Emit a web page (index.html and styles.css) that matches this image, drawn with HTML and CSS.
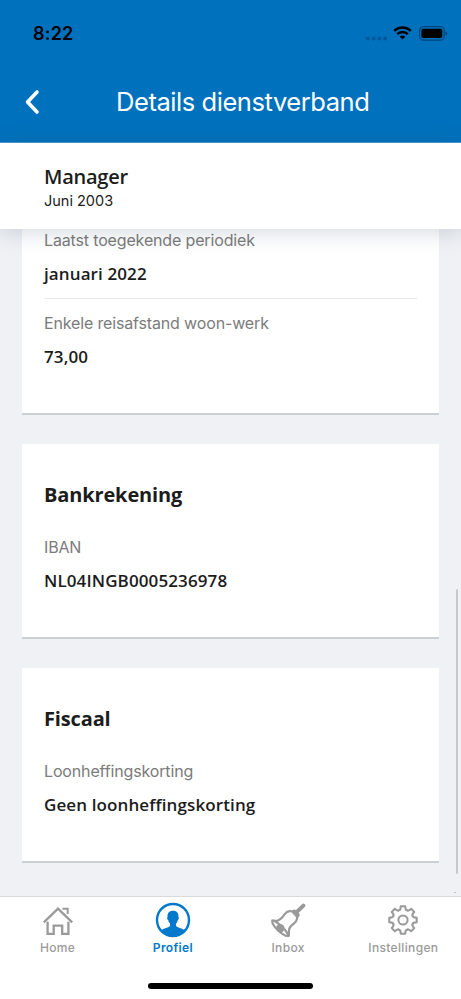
FILE: index.html
```html
<!DOCTYPE html>
<html lang="nl">
<head>
<meta charset="utf-8">
<title>Details dienstverband</title>
<link rel="stylesheet" href="styles.css">
</head>
<body>
<div class="app">
  <header class="top">
    <div class="status">
      <span class="time">8:22</span>
      <div class="status-icons">
        <svg width="22" height="5" viewBox="0 0 22 5" class="dots"><circle cx="2" cy="2.5" r="1.9"/><circle cx="7.7" cy="2.5" r="1.9"/><circle cx="13.4" cy="2.5" r="1.9"/><circle cx="19.1" cy="2.5" r="1.9"/></svg>
        <svg width="19" height="14" viewBox="0 0 19 14" class="wifi"><path d="M1.2 4.9a11.8 11.8 0 0 1 16.6 0M4.2 8.1a7.5 7.5 0 0 1 10.6 0" fill="none" stroke="#000" stroke-width="2.5"/><path d="M9.5 13.6 6.7 10.8a4 4 0 0 1 5.6 0Z"/></svg>
        <svg width="29" height="15" viewBox="0 0 29 15" class="battery"><rect x=".6" y=".6" width="24.6" height="13.6" rx="4" fill="none" stroke="#00457a" stroke-width="1.2"/><rect x="2.4" y="2.7" width="20.9" height="9.4" rx="2"/><path d="M26.5 5.3q1.7.7 1.7 2.1t-1.7 2.1z" fill="#00457a"/></svg>
      </div>
    </div>
    <div class="nav">
      <svg class="back" width="16" height="26" viewBox="0 0 16 26"><path d="M13 3 3.6 13l9.4 10"/></svg>
      <h1>Details dienstverband</h1>
    </div>
  </header>
  <section class="person">
    <h2>Manager</h2>
    <p>Juni 2003</p>
  </section>
  <main class="content">
    <section class="card first">
      <div class="field line"><div class="label">Laatst toegekende periodiek</div><div class="value">januari 2022</div></div>
      <div class="field"><div class="label">Enkele reisafstand woon-werk</div><div class="value">73,00</div></div>
    </section>
    <section class="card">
      <h3>Bankrekening</h3>
      <div class="field"><div class="label">IBAN</div><div class="value">NL04INGB0005236978</div></div>
    </section>
    <section class="card">
      <h3>Fiscaal</h3>
      <div class="field"><div class="label">Loonheffingskorting</div><div class="value">Geen loonheffingskorting</div></div>
    </section>
    <i class="scrollbar"></i><i class="speck"></i>
  </main>
  <footer class="tabs">
    <div class="tab"><svg width="36" height="36" viewBox="0 0 36 36"><g fill="none" stroke="currentColor" stroke-width="2.3"><path d="M3.8 20.4 18 6.6l14.2 13.8M7.6 19.8v12h6.1v-8.2h8.5v8.2h6.2v-12"/><path d="M22.4 6.7h5.3v5.2" stroke-width="2"/></g></svg><span>Home</span></div>
    <div class="tab active"><svg width="36" height="36" viewBox="0 0 36 36"><circle cx="18" cy="18" r="16" fill="none" stroke="currentColor" stroke-width="2.4"/><path d="M18 8.8c-4 0-5.8 2.6-5.4 6.2-.9.1-.4 2.6.6 3 .4 1.8 1 2.8 1.8 3.6v2.2c-1 2.2-6.3 2.1-9.2 5A16.4 16.4 0 0 0 18 34.4a16.4 16.4 0 0 0 12.2-5.6c-2.9-2.9-8.2-2.8-9.2-5v-2.2c.8-.8 1.4-1.8 1.8-3.6 1-.4 1.5-2.9.6-3 .4-3.6-1.4-6.2-5.4-6.2Z" fill="currentColor"/></svg><span>Profiel</span></div>
    <div class="tab"><svg width="36" height="36" viewBox="0 0 36 36"><path d="m27.4 9.4 6-5.8" stroke="currentColor" stroke-width="4" stroke-linecap="round"/><path d="m24.4 10 3 3" stroke="currentColor" stroke-width="4.6" stroke-linecap="round"/><path d="M2.3 18.4c-.4 2.1.8 4.8 4.4 8.5 5 5 9.6 8 12.2 6.8v-4.5c0-3.7 2-5.6 5-7.7 3.8-2.8 4.2-7.3 1.4-10.2-3.4-3.3-8-2.7-10.6.9-2 3-4.2 6-7.7 6.6-2 .4-3.4-.4-4.7-.4Zm1.9.7c4.2 1.7 11.1 7.6 14 13.8" fill="none" stroke="currentColor" stroke-width="2.2" stroke-linejoin="round"/><circle cx="10.3" cy="26.3" r="4.2" fill="currentColor"/></svg><span>Inbox</span></div>
    <div class="tab"><svg width="36" height="36" viewBox="-18 -18 36 36"><defs><path id="tooth" d="M-4 -9.7Q-2.8 -9.8 -2.6 -11.2L-2.2 -13.7H2.2L2.6 -11.2Q2.8 -9.8 4 -9.7"/></defs><g fill="none" stroke="currentColor" stroke-width="2.1" stroke-linecap="round" stroke-linejoin="round"><use href="#tooth"/><use href="#tooth" transform="rotate(45)"/><use href="#tooth" transform="rotate(90)"/><use href="#tooth" transform="rotate(135)"/><use href="#tooth" transform="rotate(180)"/><use href="#tooth" transform="rotate(225)"/><use href="#tooth" transform="rotate(270)"/><use href="#tooth" transform="rotate(315)"/><circle r="4.6" stroke-width="2"/></g></svg><span>Instellingen</span></div>
    <i class="home-bar"></i>
  </footer>
</div>
</body>
</html>
```
FILE: styles.css
```css
* { box-sizing: border-box; margin: 0; padding: 0; }
body { width: 461px; height: 999px; overflow: hidden; background: #eff1f5; font-family: Inter, "Liberation Sans", sans-serif; color: #1c1c1c; }
.app { display: flex; flex-direction: column; height: 999px; }
svg { display: block; flex: none; }
.top { height: 143px; background: #0071bd; border-bottom: 1px solid #4a9ad0; flex: none; }
.status { height: 62px; display: flex; justify-content: space-between; padding: 22px 13px 0 33px; color: #000; }
.time { font-size: 18px; line-height: 24px; font-weight: 600; letter-spacing: .2px; }
.status-icons { display: flex; padding-top: 4px; }
.dots { margin: 10px 5px 0 0; fill: #00569a; }
.wifi { margin-right: 7px; }
.nav { height: 80px; display: flex; align-items: center; padding-left: 24px; }
.back path { fill: none; stroke: #fff; stroke-width: 3.6; stroke-linecap: round; stroke-linejoin: round; }
h1 { margin-left: 76px; font-size: 25.5px; line-height: 32px; font-weight: 400; letter-spacing: -.44px; color: #fff; white-space: nowrap; }
.person { height: 86px; flex: none; padding: 20px 44px 0; background: #fff; box-shadow: 0 2px 22px rgba(60, 85, 105, .24); position: relative; z-index: 1; }
h2 { font: 600 20px/28px "Open Sans", sans-serif; letter-spacing: -.25px; }
.person p { font-size: 14.5px; line-height: 20px; }
.content { flex: 1; position: relative; min-height: 0; padding: 0 22px; overflow: hidden; }
.card { height: 195px; background: #fff; border-bottom: 2px solid #cccfd4; padding: 37px 22px 0; margin-bottom: 29px; }
.first { height: 186px; padding-top: 0; }
.label { font-size: 16px; line-height: 23px; letter-spacing: -.15px; color: #7b7b7b; white-space: nowrap; }
.value { font: 600 17px/24px "Open Sans", sans-serif; letter-spacing: .11px; margin-top: 10px; white-space: nowrap; }
.line { height: 70px; border-bottom: 1px solid #e8ebed; margin-bottom: 13px; }
h3 { font: 700 20px/28px "Open Sans", sans-serif; letter-spacing: -.14px; margin-bottom: 27px; }
.scrollbar { position: absolute; right: 3px; top: 360px; width: 2px; height: 285px; background: #c6c8cc; border-radius: 1px; }
.speck { position: absolute; right: 5px; bottom: 3px; width: 2px; height: 1px; background: #c0c2c6; }
.tabs { height: 103px; flex: none; display: grid; grid-template-columns: repeat(4, 1fr); background: #fff; border-top: 1px solid #d8dadd; position: relative; }
.tab { display: flex; flex-direction: column; align-items: center; padding-top: 5px; color: #9a9a9a; font-size: 12px; line-height: 16px; font-weight: 500; letter-spacing: .35px; }
.tab svg { margin-bottom: 2px; }
.active { color: #0079cc; font-weight: 600; }
.home-bar { position: absolute; left: 148px; bottom: 10px; width: 165px; height: 6px; border-radius: 3px; background: #000; }
```
